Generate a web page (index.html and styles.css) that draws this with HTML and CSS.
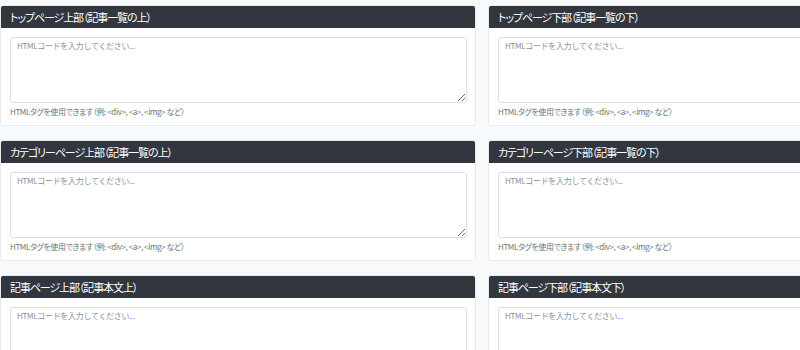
FILE: index.html
```html
<!DOCTYPE html>
<html lang="ja">
<head>
    <meta charset="UTF-8">
    <title>広告コード設定</title>
    <link rel="stylesheet" href="styles.css">
</head>
<body>
    <!-- 広告枠の設定 -->
    <div class="ad-grid">
        <div class="card">
            <div class="card-header">トップページ上部（記事一覧の上）</div>
            <div class="card-body">
                <textarea class="code-input" placeholder="HTMLコードを入力してください..."></textarea>
                <small class="hint">HTMLタグを使用できます（例: &lt;div&gt;, &lt;a&gt;, &lt;img&gt; など）</small>
            </div>
        </div>
        <div class="card">
            <div class="card-header">トップページ下部（記事一覧の下）</div>
            <div class="card-body">
                <textarea class="code-input" placeholder="HTMLコードを入力してください..."></textarea>
                <small class="hint">HTMLタグを使用できます（例: &lt;div&gt;, &lt;a&gt;, &lt;img&gt; など）</small>
            </div>
        </div>
        <div class="card">
            <div class="card-header">カテゴリーページ上部（記事一覧の上）</div>
            <div class="card-body">
                <textarea class="code-input" placeholder="HTMLコードを入力してください..."></textarea>
                <small class="hint">HTMLタグを使用できます（例: &lt;div&gt;, &lt;a&gt;, &lt;img&gt; など）</small>
            </div>
        </div>
        <div class="card">
            <div class="card-header">カテゴリーページ下部（記事一覧の下）</div>
            <div class="card-body">
                <textarea class="code-input" placeholder="HTMLコードを入力してください..."></textarea>
                <small class="hint">HTMLタグを使用できます（例: &lt;div&gt;, &lt;a&gt;, &lt;img&gt; など）</small>
            </div>
        </div>
        <div class="card">
            <div class="card-header">記事ページ上部（記事本文上）</div>
            <div class="card-body">
                <textarea class="code-input" placeholder="HTMLコードを入力してください..."></textarea>
                <small class="hint">HTMLタグを使用できます（例: &lt;div&gt;, &lt;a&gt;, &lt;img&gt; など）</small>
            </div>
        </div>
        <div class="card">
            <div class="card-header">記事ページ下部（記事本文下）</div>
            <div class="card-body">
                <textarea class="code-input" placeholder="HTMLコードを入力してください..."></textarea>
                <small class="hint">HTMLタグを使用できます（例: &lt;div&gt;, &lt;a&gt;, &lt;img&gt; など）</small>
            </div>
        </div>
    </div>
</body>
</html>
```

FILE: styles.css
```css
/* 全体 */
html {
    overflow: hidden;
}

body {
    margin: 0;
    padding: 5px 0 0 0;
    background-color: #f8f9fa;
    font-family: "Noto Sans CJK JP", "Noto Sans", sans-serif;
    color: #212529;
}

/* 2列グリッド */
.ad-grid {
    display: grid;
    grid-template-columns: 476px 476px;
    column-gap: 12px;
    row-gap: 14px;
    width: 964px;
}

/* カード */
.card {
    background-color: #fff;
    border: 1px solid #e7e9ec;
    border-radius: 3px;
    overflow: hidden;
}

.card-header {
    background-color: #32363e;
    color: #fff;
    font-size: 11px;
    letter-spacing: -1.1px;
    font-feature-settings: "palt";
    height: 22px;
    line-height: 22px;
    padding: 0 9px;
}

.card-body {
    padding: 9px 8px 7px 9px;
}

/* 入力欄 */
.code-input {
    display: block;
    box-sizing: border-box;
    width: 100%;
    height: 66px;
    margin: 0;
    padding: 2px 6px;
    border: 1px solid #dcdfe3;
    border-radius: 3px;
    font-family: "DejaVu Sans Mono", "Noto Sans CJK JP", monospace;
    font-size: 8px;
    resize: vertical;
}

.code-input::placeholder {
    color: #8a9096;
    font-family: "Noto Sans CJK JP", sans-serif;
    letter-spacing: -0.3px;
}

/* 補足テキスト */
.hint {
    display: block;
    margin-top: 3px;
    font-size: 8px;
    letter-spacing: -0.4px;
    font-feature-settings: "palt";
    line-height: 12px;
    color: #6c757d;
}
```
